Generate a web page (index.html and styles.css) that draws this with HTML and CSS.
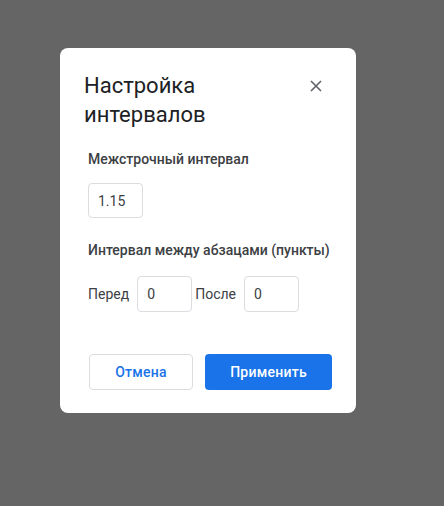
FILE: index.html
```html
<!DOCTYPE html>
<html lang="ru">
<head>
<meta charset="utf-8">
<link rel="stylesheet" href="styles.css">
</head>
<body>
<div class="dialog">
  <div class="header">
    <h1 class="title">Настройка интервалов</h1>
    <button class="close" aria-label="Закрыть">
      <svg width="12" height="12" viewBox="0 0 12 12"><path d="M1 1L11 11M11 1L1 11" stroke="#5f6368" stroke-width="1.6" fill="none"/></svg>
    </button>
  </div>
  <div class="body">
    <div class="label first">Межстрочный интервал</div>
    <div class="field">1.15</div>
    <div class="label second">Интервал между абзацами (пункты)</div>
    <div class="row">
      <span class="row-label">Перед</span>
      <div class="field">0</div>
      <span class="row-label">После</span>
      <div class="field">0</div>
    </div>
  </div>
  <div class="actions">
    <button class="btn btn-cancel">Отмена</button>
    <button class="btn btn-apply">Применить</button>
  </div>
</div>
</body>
</html>
```
FILE: styles.css
```css
html, body {
  margin: 0;
  padding: 0;
}
body {
  background: #656565;
  width: 444px;
  height: 506px;
  font-family: Roboto, "Noto Sans", sans-serif;
  padding: 48px 0 0 60px;
  box-sizing: border-box;
}
.dialog {
  width: 296px;
  height: 365px;
  background: #fff;
  border-radius: 8px;
  box-sizing: border-box;
  padding: 23px 24px 23px 24px;
  display: flex;
  flex-direction: column;
}
.header {
  display: flex;
  justify-content: space-between;
  align-items: flex-start;
}
.title {
  margin: 0;
  font-weight: 400;
  font-size: 22px;
  line-height: 29px;
  color: #202124;
  width: 150px;
}
.close {
  border: 0;
  background: none;
  padding: 0;
  margin: 7px 8px 0 0;
  width: 16px;
  height: 16px;
  display: flex;
  align-items: center;
  justify-content: center;
}
.body {
  padding-left: 4px;
  display: flex;
  flex-direction: column;
  align-items: flex-start;
}
.label {
  font-size: 14px;
  font-weight: 500;
  line-height: 20px;
  color: #3c4043;
}
.label.first {
  margin-top: 20px;
  margin-bottom: 14px;
}
.label.second {
  margin-top: 22px;
  margin-bottom: 16px;
}
.field {
  width: 55px;
  height: 35px;
  box-sizing: border-box;
  border: 1px solid #dadce0;
  border-radius: 4px;
  padding: 0 9px;
  font-size: 14px;
  color: #3c4043;
  display: flex;
  align-items: center;
}
.row {
  display: flex;
  align-items: center;
}
.row .field {
  height: 36px;
}
.row-label {
  font-size: 14px;
  color: #3c4043;
  margin-right: 8px;
}
.row .field + .row-label {
  margin-left: 3px;
}
.actions {
  margin-top: auto;
  display: flex;
  gap: 12px;
  padding-left: 5px;
}
.btn {
  height: 36px;
  border-radius: 4px;
  font-family: Roboto, "Noto Sans", sans-serif;
  font-size: 14px;
  font-weight: 500;
  letter-spacing: 0.25px;
  cursor: pointer;
}
.btn-cancel {
  width: 104px;
  background: #fff;
  border: 1px solid #dadce0;
  color: #1a73e8;
}
.btn-apply {
  width: 127px;
  background: #1a73e8;
  border: 0;
  color: #fff;
}
```
